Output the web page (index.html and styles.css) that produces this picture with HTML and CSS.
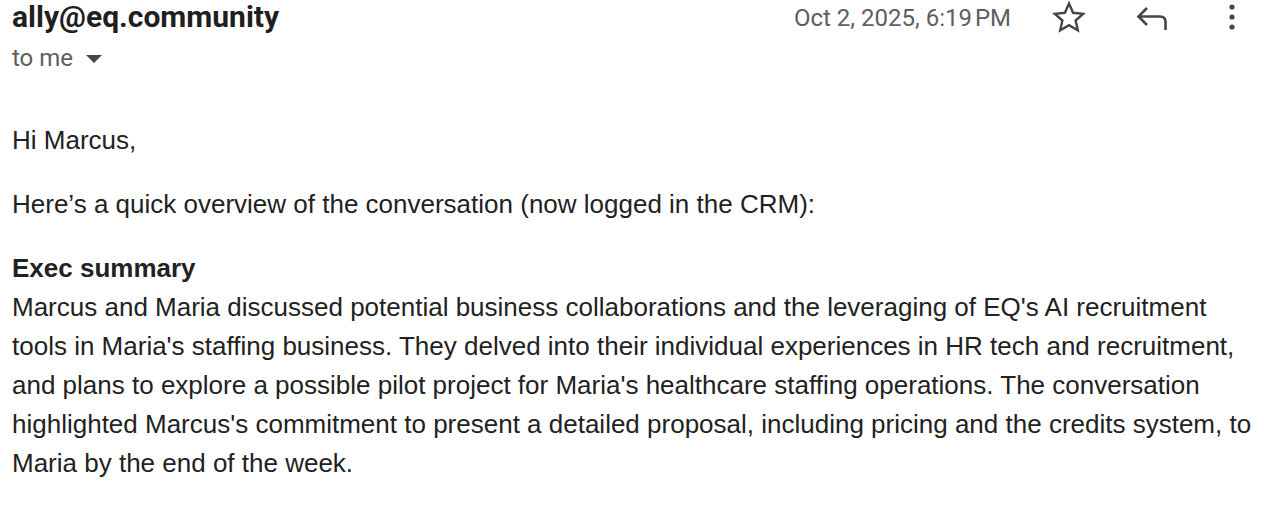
FILE: index.html
```html
<!DOCTYPE html>
<html lang="en">
<head>
<meta charset="utf-8">
<title>Email</title>
<link rel="stylesheet" href="styles.css">
</head>
<body>
<div class="mail">
  <header class="mail-head">
    <div class="from">
      <div class="sender">ally@eq.community</div>
      <div class="to">to me <span class="caret"></span></div>
    </div>
    <div class="meta">
      <span class="date">Oct 2, 2025, 6:19&#8239;PM</span>
      <span class="icon star">
        <svg viewBox="0 0 36 36" width="36" height="36"><path d="M18 3.5 L22.1 12.8 L32.1 13.8 L24.6 20.5 L26.8 30.3 L18 25.2 L9.2 30.3 L11.4 20.5 L3.9 13.8 L13.9 12.8 Z" fill="none" stroke="#444746" stroke-width="2.4" stroke-linejoin="miter"/></svg>
      </span>
      <span class="icon reply">
        <svg viewBox="0 0 36 36" width="36" height="36"><path d="M13 8 L4.5 16.5 L13 25 M4.5 16.5 H26 Q31.5 16.5 31.5 22 V30" fill="none" stroke="#444746" stroke-width="2.6"/></svg>
      </span>
      <span class="icon more">
        <svg viewBox="0 0 36 36" width="36" height="36"><circle cx="18" cy="7" r="2.6" fill="#444746"/><circle cx="18" cy="17" r="2.6" fill="#444746"/><circle cx="18" cy="27" r="2.6" fill="#444746"/></svg>
      </span>
    </div>
  </header>
  <div class="body">
    <p>Hi Marcus,</p>
    <p>Here’s a quick overview of the conversation (now logged in the CRM):</p>
    <p><b>Exec summary</b><br>Marcus and Maria discussed potential business collaborations and the leveraging of EQ's AI recruitment tools in Maria's staffing business. They delved into their individual experiences in HR tech and recruitment, and plans to explore a possible pilot project for Maria's healthcare staffing operations. The conversation highlighted Marcus's commitment to present a detailed proposal, including pricing and the credits system, to Maria by the end of the week.</p>
  </div>
</div>
</body>
</html>
```
FILE: styles.css
```css
html, body {
  margin: 0;
  padding: 0;
  background: #ffffff;
}
.mail {
  padding: 0 18px 0 12px;
}
.mail-head {
  display: flex;
  align-items: flex-start;
}
.from {
  display: flex;
  flex-direction: column;
}
.sender {
  font-family: Roboto, "Noto Sans", sans-serif;
  font-weight: 700;
  font-size: 30px;
  line-height: 34px;
  color: #1f1f1f;
}
.to {
  font-family: Roboto, "Noto Sans", sans-serif;
  font-size: 24px;
  line-height: 48px;
  color: #5e5e5e;
  display: flex;
  align-items: center;
}
.caret {
  display: inline-block;
  width: 0;
  height: 0;
  border-left: 8px solid transparent;
  border-right: 8px solid transparent;
  border-top: 8px solid #444746;
  margin-left: 13px;
  margin-top: 2px;
}
.meta {
  margin-left: auto;
  display: flex;
  align-items: flex-start;
}
.date {
  font-family: Roboto, "Noto Sans", sans-serif;
  font-size: 24px;
  line-height: 36px;
  color: #5e5e5e;
  margin-right: 40px;
}
.icon {
  display: block;
  width: 36px;
  height: 36px;
}
.icon svg {
  display: block;
}
.reply {
  margin-left: 47px;
}
.more {
  margin-left: 44px;
}
.body {
  font-family: "Liberation Sans", Arial, sans-serif;
  font-size: 26px;
  line-height: 39px;
  color: #222222;
  padding-top: 39px;
  margin-right: -12px;
}
.body p {
  margin: 0 0 25px;
}
.body b {
  font-weight: 700;
}
```
